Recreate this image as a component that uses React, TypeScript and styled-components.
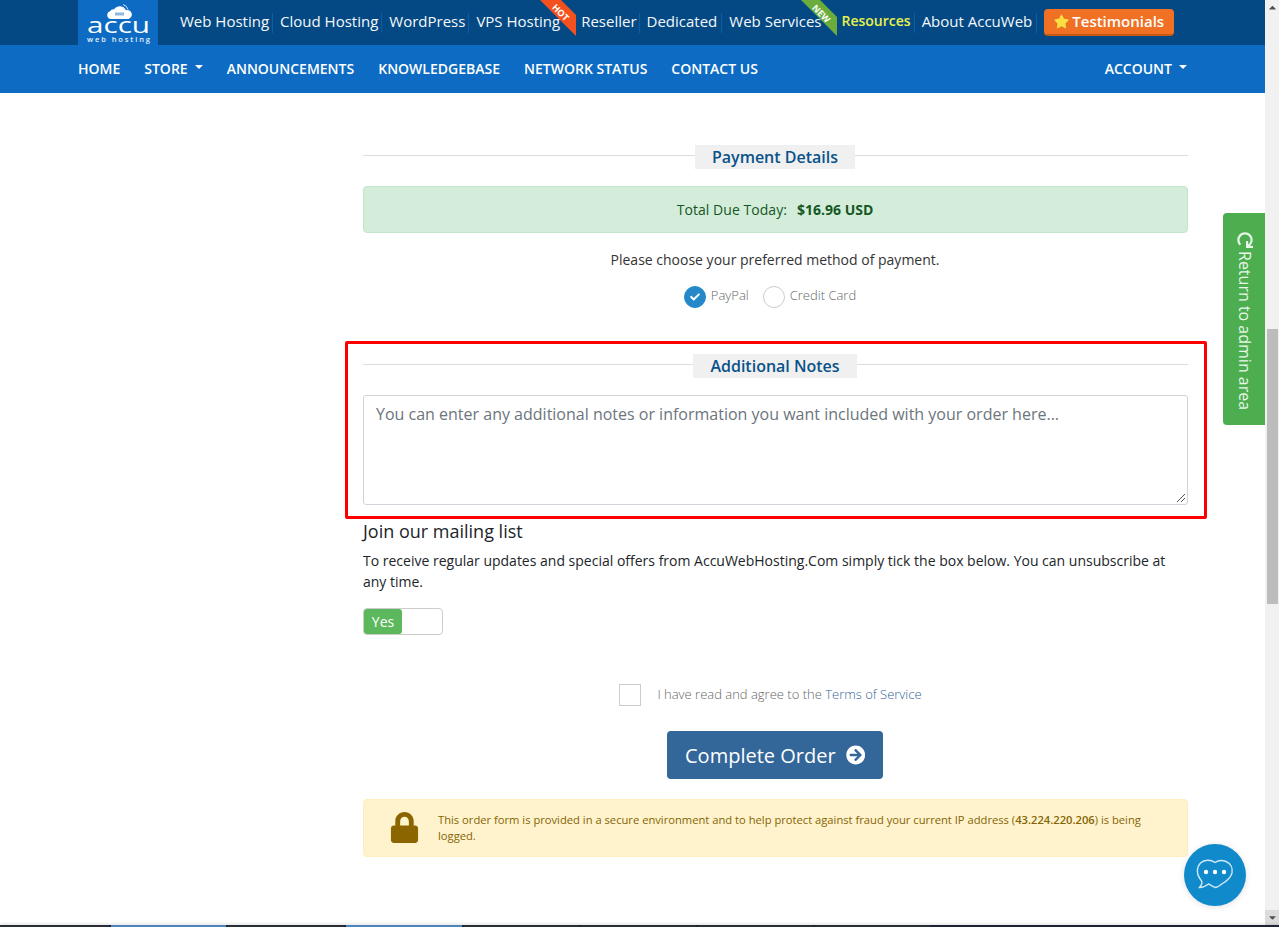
import React from 'react';
import styled, { createGlobalStyle } from 'styled-components';
import { FaStar, FaLock, FaCheck, FaRedo, FaCaretUp, FaCaretDown, FaArrowCircleRight } from 'react-icons/fa';

const GlobalStyle = createGlobalStyle`
  html, body {
    margin: 0;
    padding: 0;
    height: 100%;
    overflow: hidden;
    background: #fff;
  }
  body {
    font-family: "Open Sans", "Liberation Sans", sans-serif;
    color: #212529;
  }
  * { box-sizing: border-box; }
`;

const Shell = styled.div`
  position: relative;
  display: flex;
  width: 1279px;
  height: 927px;
  overflow: hidden;
`;

const Page = styled.div`
  position: relative;
  width: 1265px;
  height: 925px;
  overflow: hidden;
  display: flex;
  flex-direction: column;
`;

const TopBar = styled.div`
  position: relative;
  height: 45px;
  background: #044984;
  padding-left: 78px;
  display: flex;
  align-items: stretch;
  flex: none;
`;

const LogoBox = styled.div`
  width: 80px;
  height: 45px;
  background: #0d6bc3;
  flex: none;
`;

const TopLinks = styled.div`
  display: flex;
  align-items: center;
  margin-left: 15px;
  height: 45px;
`;

const TopLink = styled.a<{ $pad: number; $accent?: boolean }>`
  display: block;
  font-size: ${p => (p.$accent ? '14px' : '15px')};
  line-height: ${p => (p.$accent ? '15px' : '16px')};
  white-space: nowrap;
  color: ${p => (p.$accent ? '#e6f24a' : '#f4f8fb')};
  font-weight: ${p => (p.$accent ? 600 : 400)};
  padding: 0 ${p => p.$pad}px ${p => (p.$accent ? 5 : 4)}px 7px;
  border-right: 1px solid #0a5fa8;
`;

const TestimonialButton = styled.a`
  display: flex;
  align-items: center;
  gap: 3px;
  height: 27px;
  margin-left: 7px;
  padding: 0 10px 1px;
  background: #f07024;
  border-bottom: 2px solid #c75a12;
  border-radius: 4px;
  color: #fff;
  font-size: 15px;
  font-weight: 600;
  white-space: nowrap;
  svg { color: #f8e042; }
`;

const Ribbon = styled.svg<{ $left: number }>`
  position: absolute;
  top: 0;
  left: ${p => p.$left}px;
`;

const MainNav = styled.nav`
  height: 48px;
  flex: none;
  background: #0d6bc3;
  padding: 0 78px 2px 78px;
  display: flex;
  align-items: center;
  gap: 24px;
`;

const NavItem = styled.a<{ $push?: boolean }>`
  display: flex;
  align-items: center;
  color: #fff;
  font-size: 14px;
  font-weight: 600;
  white-space: nowrap;
  ${p => (p.$push ? 'margin-left: auto;' : '')}
`;

const Caret = styled.span`
  display: inline-block;
  margin-left: 7px;
  border-top: 4px solid #fff;
  border-left: 4px solid transparent;
  border-right: 4px solid transparent;
  margin-top: -2px;
`;

const Content = styled.main`
  width: 825px;
  margin-left: 363px;
  padding-top: 52px;
  flex: none;
`;

const SubHeading = styled.div`
  position: relative;
  height: 24px;
  padding-right: 1px;
  text-align: center;
  &::before {
    content: '';
    position: absolute;
    left: 0;
    right: 0;
    top: 10px;
    border-top: 1px solid #dcdcdc;
  }
`;

const SubHeadingLabel = styled.span<{ $w: number }>`
  position: relative;
  display: inline-block;
  width: ${p => p.$w}px;
  height: 24px;
  line-height: 24px;
  background: #f0f0f0;
  color: #0a5289;
  font-size: 16px;
  font-weight: 600;
`;

const TotalBar = styled.div`
  height: 47px;
  margin-top: 17px;
  padding-right: 1px;
  background: #d4edda;
  border: 1px solid #c3e6cb;
  border-radius: 4px;
  color: #155724;
  font-size: 14px;
  display: flex;
  align-items: center;
  justify-content: center;
  gap: 10px;
  span { letter-spacing: 0.05px; }
  b { font-weight: 700; }
`;

const ChooseText = styled.p`
  margin: 16px 0 0;
  padding-right: 1px;
  text-align: center;
  font-size: 14px;
  line-height: 21px;
  color: #333;
`;

const MethodRow = styled.div`
  display: flex;
  justify-content: center;
  align-items: center;
  gap: 14px;
  margin-top: 15px;
  height: 22px;
  padding-right: 11px;
`;

const Method = styled.div`
  display: flex;
  align-items: center;
  gap: 5px;
  font-size: 13px;
  font-weight: 300;
  color: #666;
  span:last-child { margin-top: -2px; }
`;

const RadioDot = styled.span<{ $on?: boolean }>`
  display: flex;
  align-items: center;
  justify-content: center;
  width: 22px;
  height: 22px;
  margin-top: 2px;
  border-radius: 50%;
  background: ${p => (p.$on ? '#2589c9' : '#fff')};
  border: 1px solid ${p => (p.$on ? '#2589c9' : '#ccc')};
  color: #fff;
`;

const NotesFrame = styled.section`
  margin: 34px -19px 0 -18px;
  width: 862px;
  height: 178px;
  border: 3px solid #f00;
  border-radius: 2px;
  padding: 10px 16px 0 15px;
`;

const NotesBox = styled.div`
  margin-top: 17px;
  position: relative;
  height: 110px;
  border: 1px solid #ced4da;
  border-radius: 3px;
  padding: 8px 12px;
  font-size: 16px;
  line-height: 20px;
  color: #6c757d;
  white-space: nowrap;
`;

const ResizeGrip = styled.svg`
  position: absolute;
  right: 1px;
  bottom: 1px;
`;

const MailingTitle = styled.h4`
  margin: 0;
  font-size: 18px;
  line-height: 24px;
  font-weight: 400;
  color: #212529;
`;

const MailingText = styled.p`
  margin: 7px 0 0;
  font-size: 14px;
  line-height: 21px;
  color: #212529;
`;

const Toggle = styled.div`
  margin-top: 16px;
  width: 80px;
  height: 27px;
  border: 1px solid #ccc;
  border-radius: 4px;
  background: #fff;
`;

const ToggleOn = styled.div`
  width: 38px;
  height: 25px;
  border-radius: 3px;
  background: #5cb85c;
  color: #fff;
  font-size: 14px;
  line-height: 25px;
  text-align: center;
`;

const TermsRow = styled.div`
  margin-top: 49px;
  display: flex;
  justify-content: center;
  align-items: center;
  gap: 16px;
  padding-right: 10px;
  font-size: 13px;
  font-weight: 300;
  color: #666;
  span:last-child { margin-top: -2px; }
`;

const CheckSquare = styled.span`
  width: 22px;
  height: 22px;
  border: 1px solid #ccc;
  background: #fff;
`;

const TermsLink = styled.a`
  color: #336699;
`;

const OrderRow = styled.div`
  display: flex;
  justify-content: center;
  margin-top: 25px;
  padding-right: 1px;
`;

const OrderButton = styled.button`
  display: flex;
  align-items: center;
  gap: 10px;
  width: 216px;
  height: 48px;
  padding: 0 18px;
  border: 0;
  border-radius: 4px;
  background: #336699;
  color: #fff;
  font-family: inherit;
  font-size: 20px;
  white-space: nowrap;
`;

const SecureNote = styled.div`
  margin-top: 20px;
  height: 58px;
  display: flex;
  align-items: center;
  background: #fff3cd;
  border: 1px solid #ffeeba;
  border-radius: 4px;
  padding: 0 20px 0 25px;
  color: #856404;
  font-size: 11.2px;
  line-height: 16px;
  b { font-weight: 600; }
`;

const LockWrap = styled.div`
  flex: none;
  width: 49px;
  margin-top: -2px;
  color: #8a6500;
  display: flex;
`;

const AdminTab = styled.a`
  position: absolute;
  top: 213px;
  left: 1223px;
  width: 42px;
  height: 212px;
  background: #4cae4f;
  border-radius: 4px 0 0 4px;
  color: #e8f6e8;
  font-size: 16px;
  writing-mode: vertical-rl;
  display: flex;
  align-items: center;
  justify-content: flex-start;
  gap: 3px;
  padding: 19px 0 0 1px;
  white-space: nowrap;
  svg { transform: rotate(90deg); }
`;

const ChatBubble = styled.div`
  position: absolute;
  left: 1184px;
  top: 844px;
  width: 62px;
  height: 62px;
  border-radius: 50%;
  background: #118acb;
  box-shadow: 0 1px 6px rgba(0, 0, 0, 0.12);
  display: flex;
  align-items: center;
  justify-content: center;
`;

const Scrollbar = styled.div`
  width: 14px;
  height: 925px;
  flex: none;
  background: #f1f1f1;
  display: flex;
  flex-direction: column;
  color: #505050;
`;

const ScrollArrow = styled.div`
  height: 15px;
  flex: none;
  display: flex;
  align-items: center;
  justify-content: center;
`;

const ScrollArrowDown = styled(ScrollArrow)`
  margin-top: auto;
  background: #dcdcdc;
`;

const ScrollThumb = styled.div`
  margin: 314px 1px 0 2px;
  height: 275px;
  background: #bcbcbc;
`;

const TaskStrip = styled.div`
  position: absolute;
  left: 0;
  right: 0;
  bottom: 0;
  height: 2px;
  display: flex;
  background: #1a2433;
  box-shadow: 0 -1px 3px rgba(0, 0, 0, 0.15);
`;

const TaskSegment = styled.div<{ $w: number; $on?: boolean }>`
  width: ${p => p.$w}px;
  margin-right: 2px;
  background: ${p => (p.$on ? '#4d86bd' : '#2a2e36')};
`;

const Logo = () => (
  <svg width="80" height="45" viewBox="0 0 80 45">
    <path d="M33 19 a4 4 0 0 1 -1 -7.8 a4 4 0 0 1 4 -2 a7 7 0 0 1 12 1 a4.5 4.5 0 0 1 2.5 8.8 z" fill="#fff" />
    <rect x="37" y="12.5" width="9" height="3" fill="#8db8e2" />
    <path d="M44 7 a4 4 0 0 1 3 3 M45 4.5 a7 7 0 0 1 5 5" stroke="#cfe2f5" strokeWidth="1" fill="none" />
    <text x="9" y="33" fill="#fff" fontFamily="'Open Sans', sans-serif" fontSize="21" fontWeight="400" textLength="63" lengthAdjust="spacingAndGlyphs">accu</text>
    <text x="9" y="42" fill="#e6f0fa" fontFamily="'Open Sans', sans-serif" fontSize="7.5" fontWeight="600" textLength="63">web hosting</text>
  </svg>
);

const HotRibbon = () => (
  <Ribbon $left={540} width="37" height="37" viewBox="0 0 37 37">
    <polygon points="0,0 21,0 36,15 36,36" fill="#f4511e" />
    <text x="0" y="0" transform="translate(11.5 8) rotate(45)" fill="#fff" fontFamily="'Open Sans', sans-serif" fontSize="9" fontWeight="700">HOT</text>
  </Ribbon>
);

const NewRibbon = () => (
  <Ribbon $left={801} width="37" height="37" viewBox="0 0 37 37">
    <polygon points="0,0 19,0 36,17 36,36" fill="#6aad3d" />
    <text x="0" y="0" transform="translate(10.5 8.5) rotate(45)" fill="#fff" fontFamily="'Open Sans', sans-serif" fontSize="9" fontWeight="700">NEW</text>
  </Ribbon>
);

const topLinks: { label: string; pad: number; accent?: boolean }[] = [
  { label: 'Web Hosting', pad: 3 },
  { label: 'Cloud Hosting', pad: 3 },
  { label: 'WordPress', pad: 3 },
  { label: 'VPS Hosting', pad: 13 },
  { label: 'Reseller', pad: 2 },
  { label: 'Dedicated', pad: 4 },
  { label: 'Web Services', pad: 12 },
  { label: 'Resources', pad: 3, accent: true },
  { label: 'About AccuWeb', pad: 4 },
];

const navItems: { label: string; caret?: boolean }[] = [
  { label: 'HOME' },
  { label: 'STORE', caret: true },
  { label: 'ANNOUNCEMENTS' },
  { label: 'KNOWLEDGEBASE' },
  { label: 'NETWORK STATUS' },
  { label: 'CONTACT US' },
];

const App: React.FC = () => {
  return (
    <Shell>
      <GlobalStyle />
      <Page>
        <TopBar>
          <LogoBox>
            <Logo />
          </LogoBox>
          <TopLinks>
            {topLinks.map(link => (
              <TopLink key={link.label} $pad={link.pad} $accent={link.accent}>
                {link.label}
              </TopLink>
            ))}
            <TestimonialButton>
              <FaStar size={15} />
              Testimonials
            </TestimonialButton>
          </TopLinks>
          <HotRibbon />
          <NewRibbon />
        </TopBar>

        <MainNav>
          {navItems.map(item => (
            <NavItem key={item.label}>
              {item.label}
              {item.caret && <Caret />}
            </NavItem>
          ))}
          <NavItem $push>
            ACCOUNT
            <Caret />
          </NavItem>
        </MainNav>

        <Content>
          <SubHeading>
            <SubHeadingLabel $w={160}>Payment Details</SubHeadingLabel>
          </SubHeading>

          <TotalBar>
            <span>Total Due Today:</span>
            <b>$16.96 USD</b>
          </TotalBar>

          <ChooseText>Please choose your preferred method of payment.</ChooseText>

          <MethodRow>
            <Method>
              <RadioDot $on>
                <FaCheck size={10} />
              </RadioDot>
              <span>PayPal</span>
            </Method>
            <Method>
              <RadioDot />
              <span>Credit Card</span>
            </Method>
          </MethodRow>

          <NotesFrame>
            <SubHeading>
              <SubHeadingLabel $w={164}>Additional Notes</SubHeadingLabel>
            </SubHeading>
            <NotesBox>
              You can enter any additional notes or information you want included with your order here...
              <ResizeGrip width="10" height="10" viewBox="0 0 10 10">
                <path d="M1 9 L9 1 M5 9 L9 5" stroke="#555" strokeWidth="1" />
              </ResizeGrip>
            </NotesBox>
          </NotesFrame>

          <MailingTitle>Join our mailing list</MailingTitle>
          <MailingText>
            To receive regular updates and special offers from AccuWebHosting.Com simply tick the box below. You can unsubscribe at any time.
          </MailingText>
          <Toggle>
            <ToggleOn>Yes</ToggleOn>
          </Toggle>

          <TermsRow>
            <CheckSquare />
            <span>
              I have read and agree to the <TermsLink>Terms of Service</TermsLink>
            </span>
          </TermsRow>

          <OrderRow>
            <OrderButton>
              Complete Order
              <FaArrowCircleRight size={20} />
            </OrderButton>
          </OrderRow>

          <SecureNote>
            <LockWrap>
              <FaLock size={31} />
            </LockWrap>
            <span>
              This order form is provided in a secure environment and to help protect against fraud your current IP address (<b>43.224.220.206</b>) is being logged.
            </span>
          </SecureNote>
        </Content>
      </Page>

      <Scrollbar>
        <ScrollArrow>
          <FaCaretUp size={11} />
        </ScrollArrow>
        <ScrollThumb />
        <ScrollArrowDown>
          <FaCaretDown size={11} />
        </ScrollArrowDown>
      </Scrollbar>

      <AdminTab>
        <FaRedo size={16} />
        Return to admin area
      </AdminTab>

      <ChatBubble>
        <svg width="40" height="38" viewBox="0 0 40 38" fill="none">
          <path
            d="M20 6.5 C16 3.5 9 3.5 5.5 7 C1.5 11 1.5 18 4.5 22 C5.5 23.5 6.5 24.5 7 26 C7.2 28 6 30 4.5 31.5 C8 31.5 11 30 13.5 28 C16 29 18 31 20.5 31.5 C23 31 25 29.5 27.5 27.5 C31 25.5 35.5 22 37 17 C38 12 35.5 7.5 31 5.5 C27 4 23 4.5 20 6.5 Z"
            stroke="#cfe8f6"
            strokeWidth="1.4"
          />
          <circle cx="11" cy="16" r="2.2" fill="#fff" />
          <circle cx="20" cy="16" r="2.2" fill="#fff" />
          <circle cx="29" cy="16" r="2.2" fill="#fff" />
        </svg>
      </ChatBubble>

      <TaskStrip>
        <TaskSegment $w={109} />
        <TaskSegment $w={115} $on />
        <TaskSegment $w={116} />
        <TaskSegment $w={116} $on />
        <TaskSegment $w={115} />
        <TaskSegment $w={115} />
        <TaskSegment $w={115} />
        <TaskSegment $w={115} />
      </TaskStrip>
    </Shell>
  );
};

export default App;
